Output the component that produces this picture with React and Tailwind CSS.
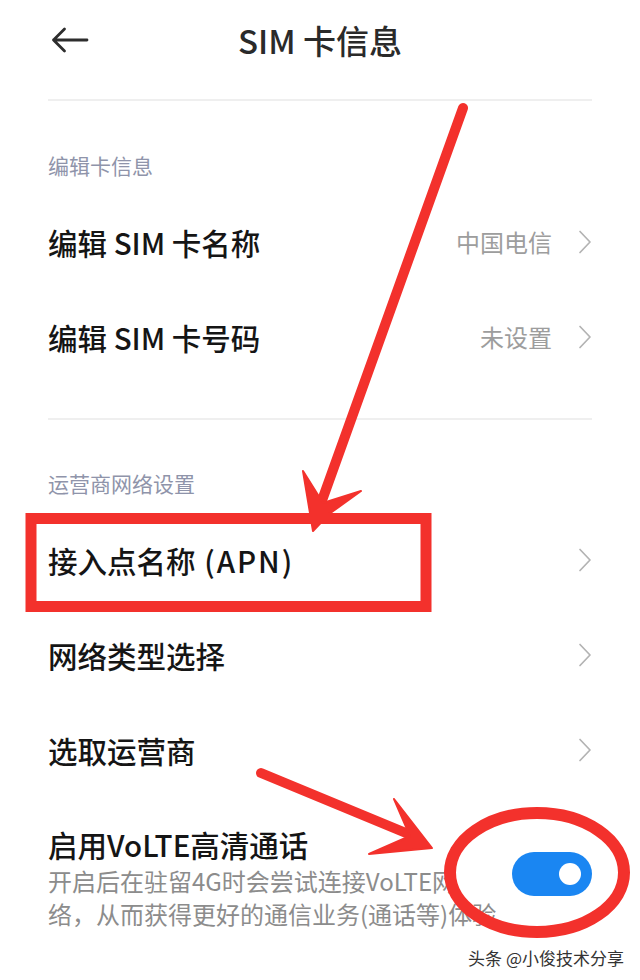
import React from "react";

const font = { fontFamily: '"Noto Sans CJK SC", "Noto Sans", sans-serif' };

const Chevron = () => (
  <svg width="14" height="24" viewBox="0 0 14 24" fill="none">
    <path d="M2 1.5 L12 12 L2 22.5" stroke="#b3b3b3" strokeWidth="1.7" strokeLinecap="round" strokeLinejoin="round" />
  </svg>
);

const Row = ({ title, value }) => (
  <div className="flex items-center justify-between h-[95px]">
    <span className="text-[29.5px] leading-[36px] font-medium text-[#151515]">{title}</span>
    <div className="flex items-center gap-[26px]">
      {value && <span className="text-[24px] leading-[32px] text-[#9d9d9d]">{value}</span>}
      <Chevron />
    </div>
  </div>
);

const SectionHeader = ({ children, pt }) => (
  <div className={`${pt} pb-[15px] text-[21px] leading-[28px] text-[#8f94aa]`}>{children}</div>
);

export default function App() {
  return (
    <div className="relative w-[640px] h-[980px] bg-white overflow-hidden" style={font}>
      <div className="px-[48px]">
        {/* header */}
        <div className="grid grid-cols-[1fr_auto_1fr] items-center h-[80px] mb-[19px]">
          <svg width="38" height="26" viewBox="0 0 38 26" fill="none" className="ml-[3px]">
            <path d="M36 13 H2.5 M13.5 2 L2.5 13 L13.5 24" stroke="#2d2d2d" strokeWidth="2.8" strokeLinecap="round" strokeLinejoin="round" />
          </svg>
          <h1 className="text-[33px] leading-[40px] font-medium text-[#2a2a2a]">SIM 卡信息</h1>
          <div />
        </div>
        <div className="h-[2px] bg-[#efefef]" />

        <SectionHeader pt="pt-[50px]">编辑卡信息</SectionHeader>
        <Row title="编辑 SIM 卡名称" value="中国电信" />
        <Row title="编辑 SIM 卡号码" value="未设置" />

        <div className="mt-[34px] h-[2px] bg-[#efefef]" />

        <SectionHeader pt="pt-[49px]">运营商网络设置</SectionHeader>
        <Row
          title={
            <>
              接入点名称<span className="tracking-[2px]"> (APN)</span>
            </>
          }
        />
        <Row title="网络类型选择" />
        <Row title="选取运营商" />

        {/* VoLTE */}
        <div className="flex items-start justify-between pt-[29px]">
          <div className="min-w-0">
            <div className="text-[29.5px] leading-[36px] font-medium text-[#151515]">启用VoLTE高清通话</div>
            <div className="mt-[2px] text-[24px] leading-[33px] text-[#8c8c8c] whitespace-nowrap">
              开启后在驻留4G时会尝试连接VoLTE网
              <br />
              络，从而获得更好的通信业务(通话等)体验
            </div>
          </div>
          <div className="mt-[26px] w-[80px] h-[44px] rounded-full bg-[#1a86f2] flex items-center justify-end pr-[11px] shrink-0">
            <div className="w-[22px] h-[22px] rounded-full bg-white" />
          </div>
        </div>
      </div>

      {/* red annotations */}
      <svg className="absolute inset-0 pointer-events-none" width="640" height="980" viewBox="0 0 640 980">
        <g fill="#f3312c" stroke="#f3312c">
          <line x1="463" y1="108" x2="320" y2="506" strokeWidth="10" strokeLinecap="round" />
          <polygon points="303,471 323,503 361,491 329,514 313,531" strokeWidth="2" strokeLinejoin="round" />
          <rect x="31" y="518.5" width="395" height="88" fill="none" strokeWidth="11" />
          <line x1="261" y1="773" x2="418" y2="838" strokeWidth="10" strokeLinecap="round" />
          <polygon points="394,799 432,848 369,854 410,836" strokeWidth="2" strokeLinejoin="round" />
          <ellipse cx="537" cy="872.5" rx="87" ry="59.5" fill="none" strokeWidth="12" />
        </g>
      </svg>

      <div className="absolute right-[16px] top-[946px] text-[17px] leading-[24px] text-[#333] [text-shadow:0_0_2px_#fff,0_0_2px_#fff]">
        头条 @小俊技术分享
      </div>
    </div>
  );
}
